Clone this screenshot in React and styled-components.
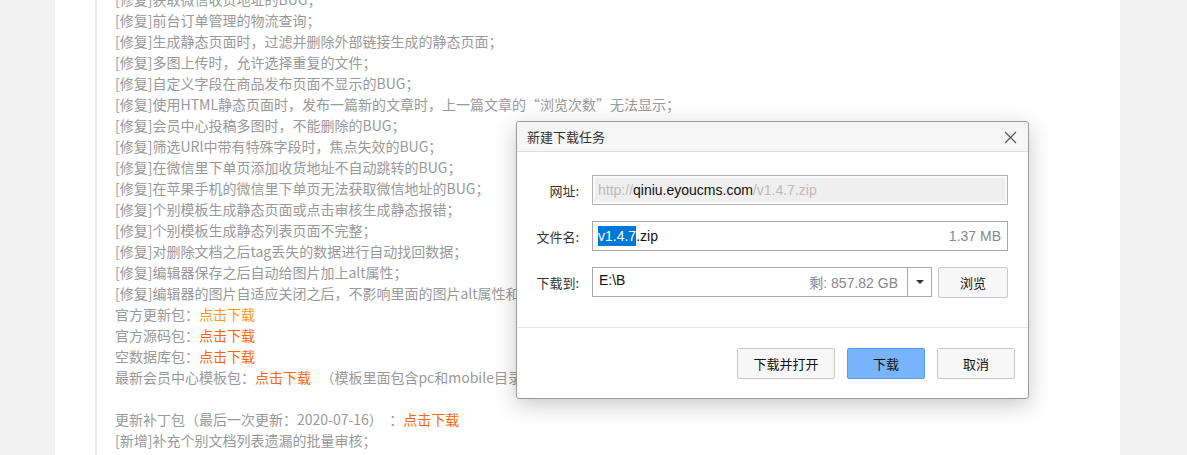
import React from "react";
import styled, { createGlobalStyle } from "styled-components";

const GlobalStyle = createGlobalStyle`
  html, body {
    margin: 0;
    padding: 0;
    background: #f1f1f1;
  }
  body {
    font-family: "Noto Sans CJK SC", "Noto Sans", sans-serif;
  }
`;

const Page = styled.div`
  position: relative;
  height: 455px;
  overflow: hidden;
  background: #f1f1f1;
  display: flex;
`;

const Column = styled.div`
  margin-left: 55px;
  width: 1065px;
  height: 100%;
  background: #fff;
  display: flex;
`;

const Article = styled.div`
  margin-left: 40px;
  border-left: 2px solid #ebebeb;
  padding-left: 18px;
  flex: 1;
`;

const Lines = styled.div`
  margin-top: -11px;
  font-size: 14px;
  line-height: 21px;
  color: #999;
  white-space: pre;
`;

const Line = styled.div`
  height: 21px;
`;

const Link = styled.span`
  color: ${(p) => (p.$light ? "#f90" : "#f60")};
`;

/* download dialog */

const Dialog = styled.div`
  position: absolute;
  left: 516px;
  top: 121px;
  width: 511px;
  border: 1px solid #9a9a9a;
  border-radius: 3px;
  background: #fff;
  box-shadow: 0 6px 22px rgba(0, 0, 0, 0.22);
  font-family: "Noto Sans CJK SC", sans-serif;
  font-size: 13px;
  color: #222;
`;

const Header = styled.div`
  height: 29px;
  display: flex;
  align-items: center;
  justify-content: space-between;
  padding: 0 11px 0 10px;
  background: #f6f6f6;
  border-bottom: 1px solid #dedede;
  border-radius: 3px 3px 0 0;
  color: #333;
`;

const Close = styled.svg`
  width: 13px;
  height: 13px;
  margin-top: 1px;
`;

const Body = styled.div`
  display: grid;
  grid-template-columns: 63px 1fr;
  column-gap: 12px;
  row-gap: 16px;
  align-items: center;
  padding: 23px 20px 29px 0;
`;

const Label = styled.div`
  text-align: right;
  padding-right: 1px;
  color: #333;
  white-space: nowrap;
`;

const Field = styled.div`
  height: 28px;
  border: 1px solid ${(p) => (p.$disabled ? "#b4b4b4" : "#a8a8a8")};
  background: ${(p) => (p.$disabled ? "#efefef" : "#fff")};
  box-shadow: ${(p) => (p.$disabled ? "inset 0 0 0 2px #fafafa" : "none")};
  display: flex;
  align-items: center;
  padding: 0 6px 0 5px;
  font-family: "Liberation Sans", "Noto Sans CJK SC", sans-serif;
  font-size: 14px;
`;

const Value = styled.span`
  flex: 1;
  color: #111;
  white-space: nowrap;
`;

const Dim = styled.span`
  color: #bbb;
`;

const Selected = styled.span`
  background: #0078d7;
  color: #fff;
  padding: 2px 0;
`;

const Hint = styled.span`
  color: #888;
  font-family: "Liberation Sans", "Noto Sans CJK SC", sans-serif;
`;

const PathRow = styled.div`
  display: flex;
  gap: 6px;
`;

const Combo = styled.div`
  flex: 1;
  height: 28px;
  border: 1px solid #a8a8a8;
  display: flex;
  align-items: center;
  font-family: "Liberation Sans", "Noto Sans CJK SC", sans-serif;
  font-size: 14px;
`;

const ComboText = styled.div`
  flex: 1;
  display: flex;
  padding: 0 9px 0 6px;
`;

const ComboArrow = styled.div`
  width: 23px;
  height: 100%;
  border-left: 1px solid #a8a8a8;
  display: flex;
  align-items: center;
  justify-content: center;
  &::after {
    content: "";
    border-left: 4px solid transparent;
    border-right: 4px solid transparent;
    border-top: 4px solid #333;
  }
`;

const Button = styled.button`
  height: 31px;
  width: ${(p) => p.$w || 78}px;
  padding: 0;
  border: 1px solid ${(p) => (p.$primary ? "#5a9ae6" : "#c9c9c9")};
  border-radius: 2px;
  background: ${(p) => (p.$primary ? "#78b4fc" : "#f7f7f7")};
  font-family: "Noto Sans CJK SC", sans-serif;
  font-size: 13px;
  color: #111;
`;

const Footer = styled.div`
  display: flex;
  justify-content: flex-end;
  gap: 12px;
  padding: 20px 13px 19px 0;
  border-top: 1px solid #e6e6e6;
`;

const fixes = [
  "[修复]获取微信收货地址的BUG；",
  "[修复]前台订单管理的物流查询；",
  "[修复]生成静态页面时，过滤并删除外部链接生成的静态页面；",
  "[修复]多图上传时，允许选择重复的文件；",
  "[修复]自定义字段在商品发布页面不显示的BUG；",
  "[修复]使用HTML静态页面时，发布一篇新的文章时，上一篇文章的“浏览次数”无法显示；",
  "[修复]会员中心投稿多图时，不能删除的BUG；",
  "[修复]筛选URl中带有特殊字段时，焦点失效的BUG；",
  "[修复]在微信里下单页添加收货地址不自动跳转的BUG；",
  "[修复]在苹果手机的微信里下单页无法获取微信地址的BUG；",
  "[修复]个别模板生成静态页面或点击审核生成静态报错；",
  "[修复]个别模板生成静态列表页面不完整；",
  "[修复]对删除文档之后tag丢失的数据进行自动找回数据；",
  "[修复]编辑器保存之后自动给图片加上alt属性；",
  "[修复]编辑器的图片自适应关闭之后，不影响里面的图片alt属性和title属性；",
];

const App = () => {
  return (
    <>
      <GlobalStyle />
      <Page>
        <Column>
          <Article>
            <Lines>
              {fixes.map((t, i) => (
                <Line key={i}>{t}</Line>
              ))}
              <Line>官方更新包：<Link $light>点击下载</Link></Line>
              <Line>官方源码包：<Link>点击下载</Link></Line>
              <Line>空数据库包：<Link>点击下载</Link></Line>
              <Line>
                最新会员中心模板包：<Link>点击下载</Link>{"   "}（模板里面包含pc和mobile目录，覆盖到对应模板目录即可）
              </Line>
              <Line />
              <Line>
                更新补丁包（最后一次更新：2020-07-16）{"  "}：<Link>点击下载</Link>
              </Line>
              <Line>[新增]补充个别文档列表遗漏的批量审核；</Line>
            </Lines>
          </Article>
        </Column>

        <Dialog>
          <Header>
            <span>新建下载任务</span>
            <Close viewBox="0 0 13 13">
              <path d="M1 1L12 12M12 1L1 12" stroke="#555" strokeWidth="1.1" fill="none" />
            </Close>
          </Header>
          <Body>
            <Label>网址:</Label>
            <Field $disabled>
              <Value>
                <Dim>http://</Dim>qiniu.eyoucms.com<Dim>/v1.4.7.zip</Dim>
              </Value>
            </Field>

            <Label>文件名:</Label>
            <Field>
              <Value>
                <Selected>v1.4.7</Selected>.zip
              </Value>
              <Hint>1.37 MB</Hint>
            </Field>

            <Label>下载到:</Label>
            <PathRow>
              <Combo>
                <ComboText>
                  <Value>E:\B</Value>
                  <Hint>剩: 857.82 GB</Hint>
                </ComboText>
                <ComboArrow />
              </Combo>
              <Button $w={70}>浏览</Button>
            </PathRow>
          </Body>
          <Footer>
            <Button $w={98}>下载并打开</Button>
            <Button $primary>下载</Button>
            <Button>取消</Button>
          </Footer>
        </Dialog>
      </Page>
    </>
  );
};

export default App;
